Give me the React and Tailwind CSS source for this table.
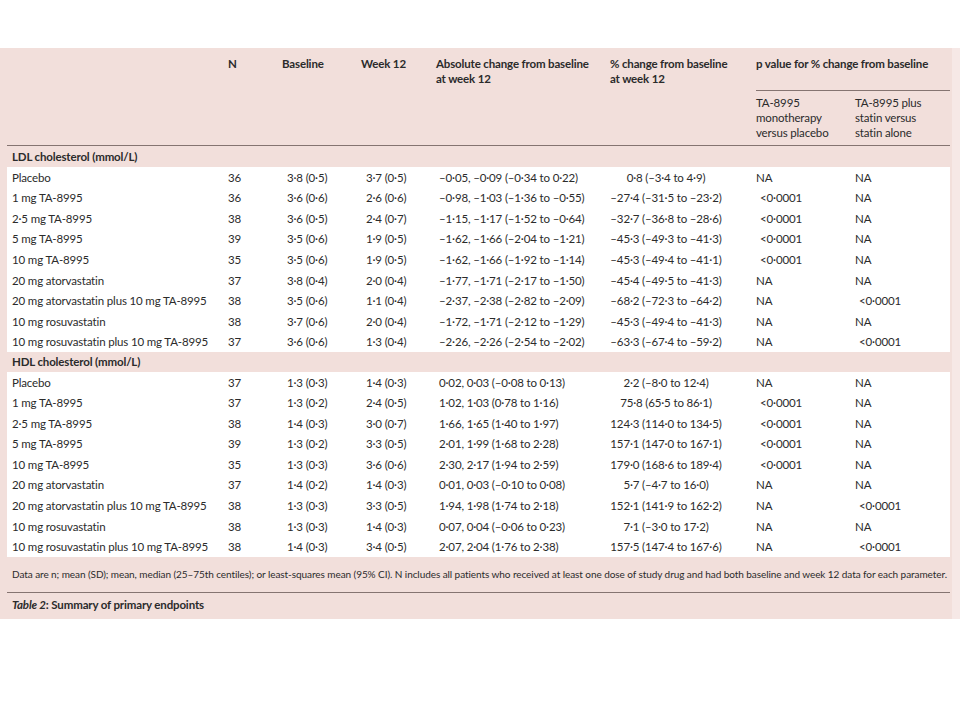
import React from "react";

const ldl = [
  ["Placebo", "36", "3·8 (0·5)", "3·7 (0·5)", "–0·05, –0·09 (–0·34 to 0·22)", "0·8 (–3·4 to 4·9)", "NA", "NA"],
  ["1 mg TA-8995", "36", "3·6 (0·6)", "2·6 (0·6)", "–0·98, –1·03 (–1·36 to –0·55)", "–27·4 (–31·5 to –23·2)", "<0·0001", "NA"],
  ["2·5 mg TA-8995", "38", "3·6 (0·5)", "2·4 (0·7)", "–1·15, –1·17 (–1·52 to –0·64)", "–32·7 (–36·8 to –28·6)", "<0·0001", "NA"],
  ["5 mg TA-8995", "39", "3·5 (0·6)", "1·9 (0·5)", "–1·62, –1·66 (–2·04 to –1·21)", "–45·3 (–49·3 to –41·3)", "<0·0001", "NA"],
  ["10 mg TA-8995", "35", "3·5 (0·6)", "1·9 (0·5)", "–1·62, –1·66 (–1·92 to –1·14)", "–45·3 (–49·4 to –41·1)", "<0·0001", "NA"],
  ["20 mg atorvastatin", "37", "3·8 (0·4)", "2·0 (0·4)", "–1·77, –1·71 (–2·17 to –1·50)", "–45·4 (–49·5 to –41·3)", "NA", "NA"],
  ["20 mg atorvastatin plus 10 mg TA-8995", "38", "3·5 (0·6)", "1·1 (0·4)", "–2·37, –2·38 (–2·82 to –2·09)", "–68·2 (–72·3 to –64·2)", "NA", "<0·0001"],
  ["10 mg rosuvastatin", "38", "3·7 (0·6)", "2·0 (0·4)", "–1·72, –1·71 (–2·12 to –1·29)", "–45·3 (–49·4 to –41·3)", "NA", "NA"],
  ["10 mg rosuvastatin plus 10 mg TA-8995", "37", "3·6 (0·6)", "1·3 (0·4)", "–2·26, –2·26 (–2·54 to –2·02)", "–63·3 (–67·4 to –59·2)", "NA", "<0·0001"],
];

const hdl = [
  ["Placebo", "37", "1·3 (0·3)", "1·4 (0·3)", "0·02, 0·03 (–0·08 to 0·13)", "2·2 (–8·0 to 12·4)", "NA", "NA"],
  ["1 mg TA-8995", "37", "1·3 (0·2)", "2·4 (0·5)", "1·02, 1·03 (0·78 to 1·16)", "75·8 (65·5 to 86·1)", "<0·0001", "NA"],
  ["2·5 mg TA-8995", "38", "1·4 (0·3)", "3·0 (0·7)", "1·66, 1·65 (1·40 to 1·97)", "124·3 (114·0 to 134·5)", "<0·0001", "NA"],
  ["5 mg TA-8995", "39", "1·3 (0·2)", "3·3 (0·5)", "2·01, 1·99 (1·68 to 2·28)", "157·1 (147·0 to 167·1)", "<0·0001", "NA"],
  ["10 mg TA-8995", "35", "1·3 (0·3)", "3·6 (0·6)", "2·30, 2·17 (1·94 to 2·59)", "179·0 (168·6 to 189·4)", "<0·0001", "NA"],
  ["20 mg atorvastatin", "37", "1·4 (0·2)", "1·4 (0·3)", "0·01, 0·03 (–0·10 to 0·08)", "5·7 (–4·7 to 16·0)", "NA", "NA"],
  ["20 mg atorvastatin plus 10 mg TA-8995", "38", "1·3 (0·3)", "3·3 (0·5)", "1·94, 1·98 (1·74 to 2·18)", "152·1 (141·9 to 162·2)", "NA", "<0·0001"],
  ["10 mg rosuvastatin", "38", "1·3 (0·3)", "1·4 (0·3)", "0·07, 0·04 (–0·06 to 0·23)", "7·1 (–3·0 to 17·2)", "NA", "NA"],
  ["10 mg rosuvastatin plus 10 mg TA-8995", "38", "1·4 (0·3)", "3·4 (0·5)", "2·07, 2·04 (1·76 to 2·38)", "157·5 (147·4 to 167·6)", "NA", "<0·0001"],
];

const cols = "grid grid-cols-[216px_54px_79px_75px_174px_146px_99px_1fr]";

function Row({ r }) {
  const p = (v) => (v.startsWith("<") ? "pl-[4px]" : "");
  return (
    <div className={cols + " h-[20.55px] items-center pl-[5px] whitespace-nowrap"}>
      <div>{r[0]}</div>
      <div>{r[1]}</div>
      <div className="pl-[5px]">{r[2]}</div>
      <div className="pl-[5px]">{r[3]}</div>
      <div className="pl-[3px]">{r[4]}</div>
      <div className="w-[112px] text-center">{r[5]}</div>
      <div className={p(r[6])}>{r[6]}</div>
      <div className={p(r[7])}>{r[7]}</div>
    </div>
  );
}

export default function App() {
  return (
    <div
      className="w-[960px] h-[720px] bg-white text-[#2b2b2b] text-[11.5px] leading-[15px] tracking-[-0.15px]"
      style={{ fontFamily: "Lato, 'Open Sans', sans-serif" }}
    >
      <div className="h-[48px]" />
      <div className="flex">
        <div className="w-[952px] bg-[#f2dfdb] pl-[7px] pr-[2px] h-[571px] flex flex-col">
          {/* header */}
          <div className={cols + " h-[98px] pt-[8px] pl-[5px] font-bold border-b-[1.5px] border-[#857471]"}>
            <div />
            <div>N</div>
            <div>Baseline</div>
            <div>Week 12</div>
            <div>
              Absolute change from baseline
              <br />
              at week 12
            </div>
            <div>
              % change from baseline
              <br />
              at week 12
            </div>
            <div className="col-span-2 flex flex-col">
              <div className="h-[35px] border-b-[1.5px] border-[#857471]">p value for % change from baseline</div>
              <div className="grid grid-cols-[99px_1fr] pt-[4px] font-normal">
                <div>
                  TA-8995
                  <br />
                  monotherapy
                  <br />
                  versus placebo
                </div>
                <div>
                  TA-8995 plus
                  <br />
                  statin versus
                  <br />
                  statin alone
                </div>
              </div>
            </div>
          </div>
          {/* LDL */}
          <div className="h-[21px] flex items-center pl-[5px] font-bold">LDL cholesterol (mmol/L)</div>
          <div className="bg-white">
            {ldl.map((r, i) => (
              <Row key={i} r={r} />
            ))}
          </div>
          <div className="h-[20px] flex items-center pl-[5px] font-bold">HDL cholesterol (mmol/L)</div>
          <div className="bg-white">
            {hdl.map((r, i) => (
              <Row key={i} r={r} />
            ))}
          </div>
          <div className="h-[36px] flex items-center pl-[5px] text-[10px] tracking-[-0.07px] whitespace-nowrap border-b-[1.5px] border-[#857471]">
            Data are n; mean (SD); mean, median (25–75th centiles); or least-squares mean (95% CI). N includes all patients who received at least one dose of study drug and had both baseline and week 12 data for each parameter.
          </div>
          <div className="h-[24px] flex items-center pl-[5px] font-bold">
            <span className="italic">Table 2</span>: Summary of primary endpoints
          </div>
        </div>
        <div className="flex-1 bg-[#f6e8e6] h-[571px]" />
      </div>
    </div>
  );
}
